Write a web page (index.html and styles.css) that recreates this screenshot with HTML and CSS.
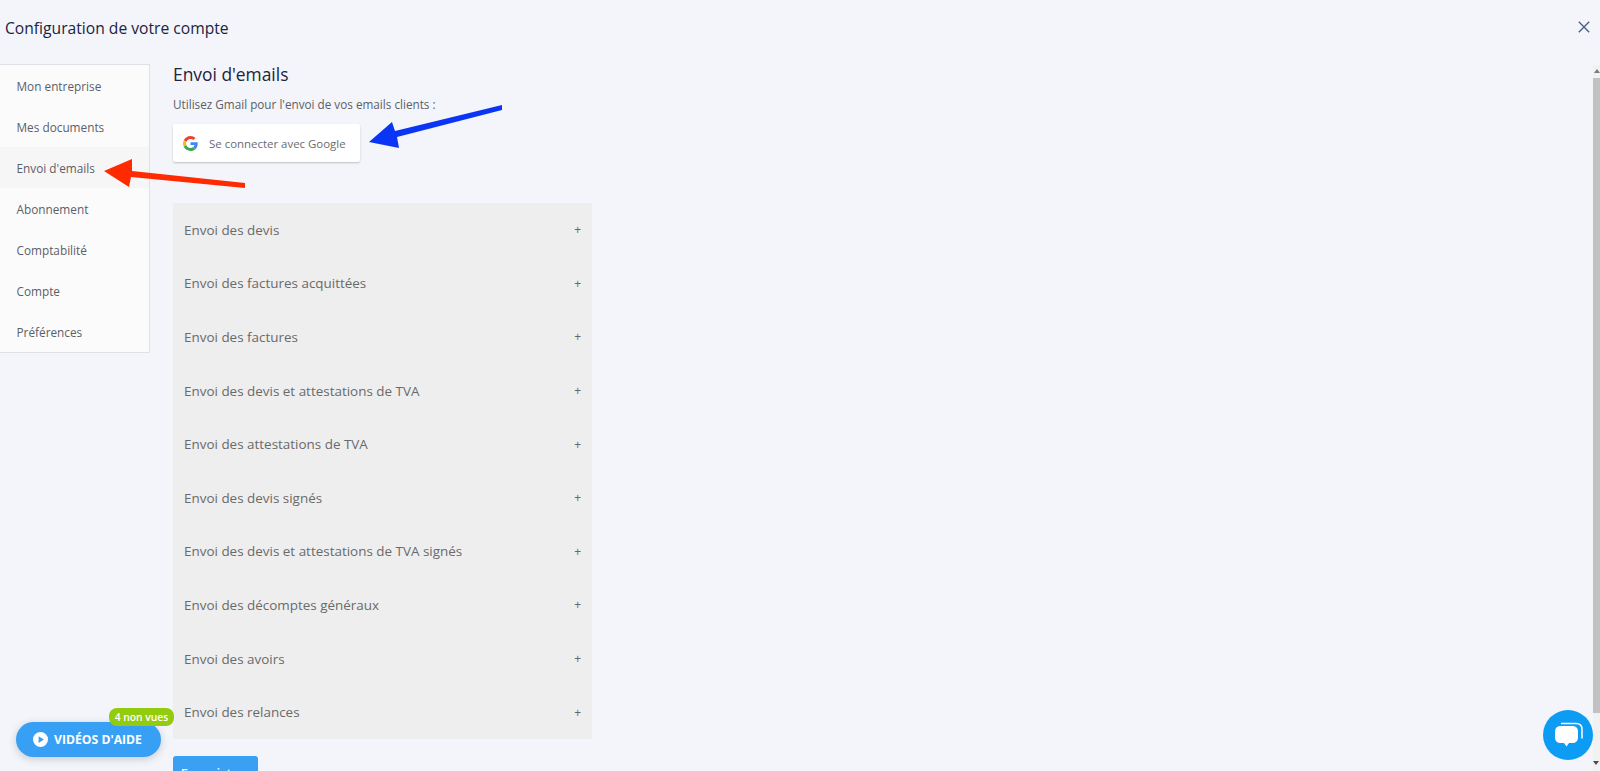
FILE: index.html
```html
<!DOCTYPE html>
<html lang="fr">
<head>
<meta charset="utf-8">
<title>Configuration de votre compte</title>
<link rel="stylesheet" href="styles.css">
</head>
<body>
<header class="top">
  <h1 class="title">Configuration de votre compte</h1>
  <svg class="close" viewBox="0 0 12 12"><path d="M.8.8l10.4 10.4M11.2.8L.8 11.2"/></svg>
</header>
<div class="layout">
  <nav class="side">
    <a class="side-item">Mon entreprise</a>
    <a class="side-item">Mes documents</a>
    <a class="side-item active">Envoi d'emails</a>
    <a class="side-item">Abonnement</a>
    <a class="side-item">Comptabilité</a>
    <a class="side-item">Compte</a>
    <a class="side-item">Préférences</a>
  </nav>
  <main class="main">
    <h2 class="heading">Envoi d'emails</h2>
    <p class="lead">Utilisez Gmail pour l'envoi de vos emails clients :</p>
    <button class="google">
      <svg class="g-logo" viewBox="0 0 48 48">
        <path fill="#EA4335" d="M24 9.5c3.54 0 6.71 1.22 9.21 3.6l6.85-6.85C35.9 2.38 30.47 0 24 0 14.62 0 6.51 5.38 2.56 13.22l7.98 6.19C12.43 13.72 17.74 9.5 24 9.5z"/>
        <path fill="#4285F4" d="M46.98 24.55c0-1.57-.15-3.09-.38-4.55H24v9.02h12.94c-.58 2.96-2.26 5.48-4.78 7.18l7.73 6c4.51-4.18 7.09-10.36 7.09-17.65z"/>
        <path fill="#FBBC05" d="M10.53 28.59c-.48-1.45-.76-2.99-.76-4.59s.27-3.14.76-4.59l-7.98-6.19C.92 16.46 0 20.12 0 24c0 3.88.92 7.54 2.56 10.78l7.97-6.19z"/>
        <path fill="#34A853" d="M24 48c6.48 0 11.93-2.13 15.89-5.81l-7.73-6c-2.15 1.45-4.92 2.3-8.16 2.3-6.26 0-11.57-4.22-13.47-9.91l-7.98 6.19C6.51 42.62 14.62 48 24 48z"/>
      </svg>
      <span>Se connecter avec Google</span>
    </button>
    <section class="accordion">
      <div class="acc-row"><span>Envoi des devis</span><span class="plus">+</span></div>
      <div class="acc-row"><span>Envoi des factures acquittées</span><span class="plus">+</span></div>
      <div class="acc-row"><span>Envoi des factures</span><span class="plus">+</span></div>
      <div class="acc-row"><span>Envoi des devis et attestations de TVA</span><span class="plus">+</span></div>
      <div class="acc-row"><span>Envoi des attestations de TVA</span><span class="plus">+</span></div>
      <div class="acc-row"><span>Envoi des devis signés</span><span class="plus">+</span></div>
      <div class="acc-row"><span>Envoi des devis et attestations de TVA signés</span><span class="plus">+</span></div>
      <div class="acc-row"><span>Envoi des décomptes généraux</span><span class="plus">+</span></div>
      <div class="acc-row"><span>Envoi des avoirs</span><span class="plus">+</span></div>
      <div class="acc-row"><span>Envoi des relances</span><span class="plus">+</span></div>
    </section>
    <button class="save">Enregistrer</button>
  </main>
</div>

<svg class="arrows" viewBox="0 0 1600 771">
  <path fill="#ff2a00" d="M245 183L132 171 132 159 104 171 129 187 131 177 245 188z"/>
  <path fill="#0a35f5" d="M502 105L395 131 392 122 369 142 399 148 397 137 502 110z"/>
</svg>

<div class="scrollbar"><span class="scroll-up"></span><span class="scroll-thumb"></span><span class="scroll-down"></span></div>

<button class="videos">
  <svg class="play" viewBox="0 0 16 16"><circle cx="8" cy="8" r="8" fill="#fff"/><path fill="#38a0f4" d="M6 4.4l5.6 3.6L6 11.6z"/></svg>
  VIDÉOS D'AIDE
  <span class="badge">4 non vues</span>
</button>

<div class="chat">
  <svg viewBox="0 0 50 50" class="chat-ico">
    <path fill="#fff" d="M12 22c0-4 2-6 6-6h11c4 0 6 2 6 6v5c0 4-2 6-6 6h-3l-2.500 3.500-2.500-3.500h-3c-4 0-6-2-6-6z"/>
    <path fill="none" stroke="#fff" stroke-width="1.500" d="M18 13.500h15c4 0 6 2 6 6v9"/>
  </svg>
</div>
</body>
</html>
```
FILE: styles.css
```css
* { box-sizing: border-box; }
html, body { margin: 0; height: 771px; overflow: hidden; }
body { background: #f3f5fa; font-family: "Open Sans", sans-serif; color: #5f6168; position: relative; }

.top { height: 64px; display: flex; justify-content: space-between; align-items: flex-start; padding: 17px 10px 0 5px; }
.title { margin: 0; font-size: 15.650px; line-height: 22px; font-weight: 400; color: #20233f; }
.close { width: 12px; height: 12px; margin-top: 4px; }
.close path { stroke: #4a6187; stroke-width: 1.4; fill: none; }

.layout { display: flex; align-items: flex-start; }
.side { width: 150px; margin-right: 23px; background: #fbfbfc; border: 1px solid #dfe1e6; border-left: 0; display: flex; flex-direction: column; }
.side-item { height: 41px; line-height: 43px; padding-left: 16.500px; font-size: 11.800px; color: #5c5f68; }
.side-item.active { background: #f6f6f7; }

.main { width: 419px; }
.heading { margin: -1px 0 0; font-size: 17.400px; line-height: 22px; font-weight: 400; color: #20233f; }
.lead { margin: 10px 0 0; font-size: 11.730px; line-height: 18px; color: #5c5f68; }
.google { display: flex; align-items: center; width: 187px; height: 38px; margin-top: 11px; padding: 0 0 0 10px; border: 0; border-radius: 2px; background: #fff; box-shadow: 0 1px 2px rgba(0,0,0,.22); font: 500 11.450px "Open Sans", sans-serif; color: #6a6c72; }
.g-logo { width: 15px; height: 15px; margin-right: 11px; }

.accordion { margin-top: 41px; background: #eeeeee; }
.acc-row { height: 53.600px; display: flex; justify-content: space-between; align-items: center; padding: 0 11px; font-size: 13.450px; color: #6a6a6a; }
.plus { font-size: 12px; color: #666; }

.save { display: block; width: 85px; height: 34px; margin-top: 17px; border: 0; border-radius: 3px; background: #3aa0f3; color: #fff; font: 600 13px "Open Sans", sans-serif; }

.arrows { position: absolute; left: 0; top: 0; width: 1600px; height: 771px; pointer-events: none; }

.scrollbar { position: absolute; right: 0; top: 65px; width: 7px; height: 706px; background: #f1f1f1; display: flex; flex-direction: column; }
.scroll-up { height: 13px; flex: none; background: #f1f1f1; position: relative; }
.scroll-up::after { content: ""; position: absolute; left: 1px; top: 4px; border: 3px solid transparent; border-top: 0; border-bottom: 4px solid #7a7a7a; }
.scroll-thumb { height: 635px; flex: none; background: #c1c1c1; }
.scroll-down { height: 13px; flex: none; margin-top: auto; position: relative; }
.scroll-down::after { content: ""; position: absolute; left: 0; top: 3px; border: 3px solid transparent; border-bottom: 0; border-top: 4px solid #4a4a4a; }

.videos { position: absolute; left: 16px; top: 722px; width: 145px; height: 35px; display: flex; align-items: center; gap: 6px; padding: 0 0 0 17px; border: 0; border-radius: 18px; background: #38a0f4; color: #fff; font: 700 12.200px "Open Sans", sans-serif; box-shadow: 0 2px 8px rgba(0,0,0,.18); }
.play { width: 15px; height: 15px; }
.badge { position: absolute; left: 93px; top: -14px; width: 65px; height: 18px; border-radius: 8px; background: #93cb0f; color: #fff; font: 600 10.300px/18px "Open Sans", sans-serif; text-align: center; }

.chat { position: absolute; left: 1543px; top: 710px; width: 50px; height: 50px; border-radius: 50%; background: #0d9cf4; }
.chat-ico { display: block; width: 50px; height: 50px; }
```
